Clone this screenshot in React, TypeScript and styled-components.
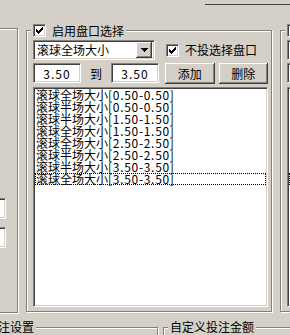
import React from "react"
import styled, { createGlobalStyle } from "styled-components"

const GlobalStyle = createGlobalStyle`
    html, body {
        margin: 0;
        padding: 0;
        background: #d4d0c8;
    }
`

const Screen = styled.div`
    width: 290px;
    height: 335px;
    overflow: hidden;
    background: #d4d0c8;
    color: #000;
    display: flex;
    flex-direction: column;
    font-family: "Noto Sans CJK SC", "Liberation Sans", sans-serif;
    font-size: 12px;
    line-height: 12px;
`

const TopStrip = styled.div`
    height: 24px;
    flex: none;
    display: flex;
    justify-content: flex-end;
    align-items: flex-start;
`

const TopEdge = styled.div`
    width: 85px;
    height: 1px;
    margin-top: 4px;
    background: #404040;
`

const MainRow = styled.div`
    display: flex;
    align-items: flex-start;
    gap: 8px;
    margin-left: -42px;
    flex: none;
`

const Group = styled.fieldset`
    margin: 0;
    min-width: 0;
    box-sizing: border-box;
    flex: none;
    border: 1px solid #808080;
    box-shadow: inset 1px 1px 0 #fff, 1px 1px 0 #fff;
`

const GroupLegend = styled.legend`
    padding: 0 2px;
    margin-left: -2px;
    height: 13px;
    display: flex;
    align-items: center;
    gap: 6px;
    line-height: 13px;
    background: #d4d0c8;
    white-space: nowrap;
`

const SideGroup = styled(Group)`
    width: 60px;
    height: 285px;
    margin-top: 4px;
    padding: 169px 11px 0 0;
    display: flex;
    flex-direction: column;
    align-items: flex-end;
    gap: 8px;
`

const PanFrame = styled(Group)`
    width: 246px;
    height: 288px;
    padding: 3px 3px 4px 6px;
    display: flex;
    flex-direction: column;
    gap: 3px;
`

const Row = styled.div<{ $h: number }>`
    height: ${p => p.$h}px;
    display: flex;
    align-items: center;
    flex: none;
`

const sunken = `
    box-sizing: border-box;
    background: #fff;
    border: 1px solid;
    border-color: #808080 #fff #fff #808080;
    box-shadow: inset 1px 1px 0 #404040, inset -1px -1px 0 #d4d0c8;
`

const raised = `
    box-sizing: border-box;
    background: #d4d0c8;
    box-shadow: inset -1px -1px 0 #404040, inset 1px 1px 0 #fff,
        inset -2px -2px 0 #808080, inset 2px 2px 0 #d4d0c8;
`

const CheckBox = styled.span`
    ${sunken}
    width: 13px;
    height: 13px;
    flex: none;
    display: flex;

    svg {
        display: block;
    }
`

const CheckLabel = styled.label`
    display: flex;
    align-items: center;
    gap: 6px;
    margin-left: 11px;
    white-space: nowrap;
`

const Combo = styled.div`
    ${sunken}
    width: 122px;
    height: 20px;
    padding: 2px;
    display: flex;
    align-items: center;
`

const ComboText = styled.span`
    flex: 1;
    padding-left: 1px;
    white-space: nowrap;
`

const DropButton = styled.span`
    ${raised}
    width: 16px;
    height: 16px;
    flex: none;
    display: flex;
    align-items: center;
    justify-content: center;
`

const NumInput = styled.input`
    ${sunken}
    width: 48px;
    height: 20px;
    margin: 0;
    padding: 0;
    font: inherit;
    letter-spacing: 1px;
    text-align: center;
    color: #000;
    outline: none;
    align-self: flex-start;
`

const RangeWord = styled.span`
    width: 30px;
    text-align: center;
    flex: none;
`

const Button = styled.button<{ $gap: number }>`
    ${raised}
    width: 50px;
    height: 21px;
    margin: 0 0 0 ${p => p.$gap}px;
    padding: 0;
    border: none;
    font: inherit;
    color: #000;
`

const ListBox = styled.div`
    ${sunken}
    flex: 1;
    padding: 1px;
    overflow: hidden;
`

const ListItem = styled.div<{ $focus?: boolean }>`
    height: 12px;
    line-height: 12px;
    padding-left: 1px;
    white-space: nowrap;
    outline: ${p => (p.$focus ? "1px dotted #000" : "none")};
    outline-offset: -1px;
`

const Range = styled.span`
    letter-spacing: 0.7px;
`

const BottomRow = styled.div`
    display: flex;
    gap: 5px;
    margin-left: -21px;
    margin-top: 7px;
    flex: none;
`

const BottomGroup = styled(Group)<{ $w: number }>`
    width: ${p => p.$w}px;
    height: 60px;
    padding: 0 6px;
`

const BottomLegend = styled(GroupLegend)`
    height: 14px;
    line-height: 14px;
`

const SideInput = styled.input`
    ${sunken}
    width: 40px;
    height: 21px;
    margin: 0;
    flex: none;
    outline: none;
`

const Check = () => (
    <CheckBox>
        <svg width="11" height="11" viewBox="0 0 11 11" shapeRendering="crispEdges">
            {[2, 3, 4, 3, 2, 1, 0].map((y, i) => (
                <rect key={i} x={2 + i} y={2 + y} width="1" height="3" fill="#000" />
            ))}
        </svg>
    </CheckBox>
)

const DownArrow = () => (
    <svg width="7" height="4" viewBox="0 0 7 4" shapeRendering="crispEdges">
        <polygon points="0,0 7,0 3.5,4" fill="#000" />
    </svg>
)

const panItems = [
    { name: "滚球全场大小", range: "[0.50-0.50]" },
    { name: "滚球半场大小", range: "[0.50-0.50]" },
    { name: "滚球半场大小", range: "[1.50-1.50]" },
    { name: "滚球全场大小", range: "[1.50-1.50]" },
    { name: "滚球全场大小", range: "[2.50-2.50]" },
    { name: "滚球半场大小", range: "[2.50-2.50]" },
    { name: "滚球半场大小", range: "[3.50-3.50]" },
    { name: "滚球全场大小", range: "[3.50-3.50]" },
]

interface PanGroupProps {
    items: { name: string, range: string }[]
    from: string
    to: string
}

const PanGroup: React.FC<PanGroupProps> = ({ items, from, to }) => (
    <PanFrame>
        <GroupLegend>
            <Check />
            启用盘口选择
        </GroupLegend>
        <Row $h={20}>
            <Combo>
                <ComboText>滚球全场大小</ComboText>
                <DropButton><DownArrow /></DropButton>
            </Combo>
            <CheckLabel>
                <Check />
                不投选择盘口
            </CheckLabel>
        </Row>
        <Row $h={21}>
            <NumInput defaultValue={from} readOnly />
            <RangeWord>到</RangeWord>
            <NumInput defaultValue={to} readOnly />
            <Button $gap={6}>添加</Button>
            <Button $gap={4}>删除</Button>
        </Row>
        <ListBox>
            {items.map((item, i) => (
                <ListItem key={i} $focus={i === items.length - 1}>
                    {item.name}<Range>{item.range}</Range>
                </ListItem>
            ))}
        </ListBox>
    </PanFrame>
)

export default function App() {
    return <Screen>
        <GlobalStyle />
        <TopStrip>
            <TopEdge />
        </TopStrip>
        <MainRow>
            <SideGroup>
                <SideInput readOnly />
                <SideInput readOnly />
            </SideGroup>
            <PanGroup items={panItems} from="3.50" to="3.50" />
            <PanGroup items={panItems} from="3.50" to="3.50" />
        </MainRow>
        <BottomRow>
            <BottomGroup $w={179}>
                <BottomLegend>投注设置</BottomLegend>
            </BottomGroup>
            <BottomGroup $w={200}>
                <BottomLegend>自定义投注金额</BottomLegend>
            </BottomGroup>
        </BottomRow>
    </Screen>
}
